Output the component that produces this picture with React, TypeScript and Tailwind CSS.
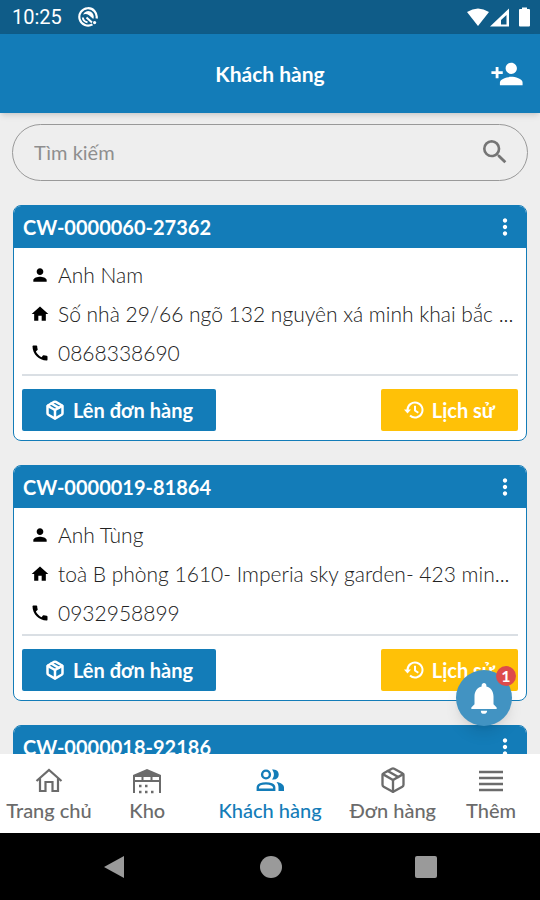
import { useState } from "react";
import { FiPackage } from "react-icons/fi";
import { MdCall, MdHome, MdMoreVert, MdNotifications, MdPerson, MdPersonAdd, MdSearch } from "react-icons/md";

type Customer = {
  code: string;
  details?: {
    name: string;
    address: string;
    phone: string;
  };
};

const customers: Customer[] = [
  {
    code: "CW-0000060-27362",
    details: {
      name: "Anh Nam",
      address: "Số nhà 29/66 ngõ 132 nguyên xá minh khai bắc ...",
      phone: "0868338690",
    },
  },
  {
    code: "CW-0000019-81864",
    details: {
      name: "Anh Tùng",
      address: "toà B phòng 1610- Imperia sky garden- 423 min...",
      phone: "0932958899",
    },
  },
  { code: "CW-0000018-92186" },
];

function StatusBar() {
  return (
    <div className="flex h-[34px] shrink-0 items-center justify-between bg-[#0f5c88] pr-[9px] pl-3 text-white">
      <div className="flex items-center gap-4">
        <span className="font-[Roboto,sans-serif] text-xl">10:25</span>
        <svg viewBox="0 0 20 20" className="size-5">
          <path d="M14.500 17.400A8.700 8.700 0 1 1 18.600 11.500" fill="none" stroke="currentColor" strokeWidth="2.200" />
          <path d="M5 7.500A5.600 5.600 0 0 1 15.300 12L11 8.200Q8 6 5 7.500Z" fill="currentColor" />
          <path d="M4.800 10.500A5.400 5.400 0 0 0 9.500 15.200M8.500 10.500 14 15.500" fill="none" stroke="currentColor" strokeWidth="2" />
          <circle cx="16.600" cy="15.600" r="1.600" fill="currentColor" />
        </svg>
      </div>
      <svg viewBox="0 0 64 20" className="h-5 w-16" fill="currentColor">
        <path d="M0 5Q11-2 22 5L11 19Z" />
        <path d="M23 19.500 42 1.500v18ZM34 17.500h5.500V8L34 13Z" fillRule="evenodd" />
        <path d="M53 2h2V.5h5V2h2q1 0 1 1v15.500q0 1-1 1h-9q-1 0-1-1V3q0-1 1-1Z" />
      </svg>
    </div>
  );
}

function HistoryIcon() {
  return (
    <svg viewBox="0 0 20 20" className="size-5" fill="none" stroke="currentColor" strokeWidth="2">
      <path d="M3.500 10A7.500 7.500 0 1 1 6 15.600M11 5.800v4.700l3.300 2.300" />
      <path d="M0 9.500h7L3.500 13.500Z" fill="currentColor" stroke="none" />
    </svg>
  );
}

function CustomerCard({ customer }: { customer: Customer }) {
  const { code, details } = customer;

  return (
    <article className="overflow-hidden rounded-lg border border-[#137cb8] bg-white">
      <div className="flex h-[42px] items-center justify-between bg-[#137cb8] pr-2 pl-[9px] text-white">
        <h2 className="text-xl font-bold">{code}</h2>
        <button type="button" aria-label="Tùy chọn">
          <MdMoreVert className="size-[26px]" />
        </button>
      </div>
      {details && (
        <div className="px-2 pt-[7px]">
          <div className="flex flex-col px-2 pb-[2px] text-[21px] font-light text-[#222]">
            <p className="flex h-[39px] items-center gap-2">
              <MdPerson className="size-5 shrink-0 text-black" />
              <span className="whitespace-nowrap">{details.name}</span>
            </p>
            <p className="flex h-[39px] items-center gap-2">
              <MdHome className="size-5 shrink-0 text-black" />
              <span className="whitespace-nowrap">{details.address}</span>
            </p>
            <p className="flex h-[39px] items-center gap-2">
              <MdCall className="size-5 shrink-0 text-black" />
              <span className="whitespace-nowrap">{details.phone}</span>
            </p>
          </div>
          <div className="flex justify-between border-t-2 border-[#dadfe4] pt-[13px] pb-[9px] text-xl font-bold text-white">
            <button type="button" className="flex h-[42px] items-center gap-2 rounded-xs bg-[#137cb8] px-[23px]">
              <FiPackage className="size-5" strokeWidth={3} />
              Lên đơn hàng
            </button>
            <button type="button" className="flex h-[42px] items-center gap-2 rounded-xs bg-[#ffc107] px-[23px]">
              <HistoryIcon />
              Lịch sử
            </button>
          </div>
        </div>
      )}
    </article>
  );
}

function HomeIcon() {
  return (
    <svg viewBox="0 0 28 28" className="size-7" fill="none" stroke="currentColor" strokeWidth="2.200">
      <path d="M1.500 15 14 4 26.500 15M5 12.500V25h5.500v-9h7v9H23V12.500" />
    </svg>
  );
}

function WarehouseIcon() {
  return (
    <svg viewBox="0 0 28 28" className="size-7">
      <path d="M0 9 14 3l14 6v2H0Z" fill="currentColor" />
      <path d="M1 9v18M27 9v18M1 15h26M9.500 10v5M18.500 10v5" fill="none" stroke="currentColor" strokeWidth="2" />
      <path d="M6 20h2.500M12 20h2.500M6 26h2.500M12 26h2.500M18 26h2.500" stroke="currentColor" strokeWidth="2.500" />
    </svg>
  );
}

function CustomersIcon() {
  return (
    <svg viewBox="0 0 28 28" className="size-7">
      <g fill="none" stroke="currentColor" strokeWidth="2.400">
        <circle cx="10" cy="8.500" r="3.900" />
        <path d="M1.800 23.800V21.500c0-5.500 16.400-5.500 16.400 0v2.300Z" />
      </g>
      <path
        d="M16 3.600c9-1.800 9 11.600 0 9.800 2.600-3 2.600-6.800 0-9.800ZM20.500 16c4.500.8 7.500 2.500 7.500 5.500V25h-5.500v-3.500c0-2.200-.7-4-2-5.500Z"
        fill="currentColor"
      />
    </svg>
  );
}

function MenuIcon() {
  return (
    <svg viewBox="0 0 28 28" className="size-7" stroke="currentColor" strokeWidth="2.400">
      <path d="M2 6h24M2 12h24M2 18h24M2 24h24" />
    </svg>
  );
}

const tabs = [
  { label: "Trang chủ", icon: <HomeIcon />, width: "w-[98px]" },
  { label: "Kho", icon: <WarehouseIcon />, width: "w-[98px]" },
  { label: "Khách hàng", icon: <CustomersIcon />, width: "w-[147px]", active: true },
  { label: "Đơn hàng", icon: <FiPackage className="size-7" />, width: "w-[98px]" },
  { label: "Thêm", icon: <MenuIcon />, width: "w-[98px]" },
];

export default function App() {
  const [keyword, setKeyword] = useState("");

  return (
    <div className="flex h-screen flex-col overflow-hidden bg-[#eeeeee] font-[Lato,'Noto_Sans',sans-serif]">
      <StatusBar />
      <header className="z-10 grid h-[79px] shrink-0 grid-cols-[1fr_auto_1fr] items-center bg-[#137cb8] px-4 text-white shadow-md">
        <h1 className="col-start-2 text-[21px] font-bold">Khách hàng</h1>
        <button type="button" aria-label="Thêm khách hàng" className="justify-self-end">
          <MdPersonAdd className="size-[34px]" />
        </button>
      </header>

      <div className="relative min-h-0 flex-1">
        <main className="flex h-full flex-col overflow-hidden px-3 pt-[11px]">
          <label className="flex h-[57px] shrink-0 items-center rounded-full border border-[#999] pr-4 pb-[2px] pl-[21px]">
            <input
              type="text"
              aria-label="Tìm kiếm"
              placeholder="Tìm kiếm"
              value={keyword}
              onChange={(e) => setKeyword(e.target.value)}
              className="min-w-0 flex-1 text-xl text-[#444] outline-none placeholder:text-[#8e8e8e]"
            />
            <MdSearch className="size-8 text-[#757575]" />
          </label>
          <div className="mx-px mt-6 flex flex-col gap-6">
            {customers.map((customer) => (
              <CustomerCard key={customer.code} customer={customer} />
            ))}
          </div>
        </main>

        <button
          type="button"
          aria-label="Thông báo"
          className="absolute right-7 bottom-7 flex size-14 items-center justify-center rounded-full bg-[#4293c2] text-white shadow-lg"
        >
          <MdNotifications className="size-[38px]" />
          <span className="absolute -top-1 -right-1 flex size-5 items-center justify-center rounded-full bg-[#dd4b4b] text-base font-bold">
            1
          </span>
        </button>
      </div>

      <nav className="flex h-[79px] shrink-0 justify-between bg-white">
        {tabs.map((tab) => (
          <a
            key={tab.label}
            href="#"
            className={`flex ${tab.width} flex-col items-center pt-3 text-xl leading-8 font-medium whitespace-nowrap ${
              tab.active ? "text-[#137cb8]" : "text-[#6b6b6b]"
            }`}
          >
            {tab.icon}
            {tab.label}
          </a>
        ))}
      </nav>

      <div className="flex h-[67px] shrink-0 items-center justify-around bg-black px-9">
        <button type="button" aria-label="Quay lại">
          <svg viewBox="0 0 24 24" className="size-6" fill="#9a9a9a">
            <path d="M1 12 21 1v22Z" />
          </svg>
        </button>
        <button type="button" aria-label="Màn hình chính" className="size-[22px] rounded-full bg-[#9a9a9a]" />
        <button type="button" aria-label="Ứng dụng gần đây" className="size-[22px] rounded-xs bg-[#9a9a9a]" />
      </div>
    </div>
  );
}
